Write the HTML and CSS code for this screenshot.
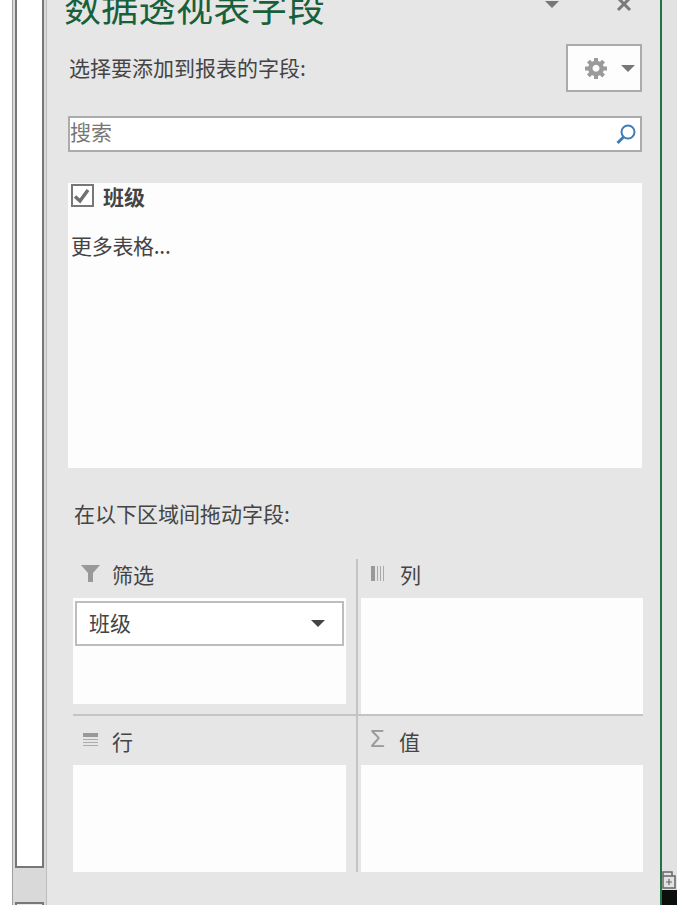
FILE: index.html
```html
<!DOCTYPE html>
<html lang="zh-CN">
<head>
    <meta charset="UTF-8">
    <meta name="viewport" content="width=device-width, initial-scale=1.0">
    <title>数据透视表字段</title>
    <link rel="stylesheet" href="styles.css">
</head>
<body>
    <div class="window">
        <div class="sheet"></div>
        <div class="scrollbar">
            <div class="thumb"></div>
            <div class="scroll-btn"></div>
        </div>

        <div class="panel">
            <div class="title-row">
                <h1>数据透视表字段</h1>
                <div class="title-icons">
                    <span class="caret caret-title"></span>
                    <svg class="close-icon" width="16" height="16" viewBox="0 0 16 16">
                        <path d="M2 1 L14 13 M14 1 L2 13" stroke="#7a7a7a" stroke-width="3" fill="none"/>
                    </svg>
                </div>
            </div>

            <div class="choose-row">
                <p class="choose-label">选择要添加到报表的字段:</p>
                <div class="gear-btn">
                    <svg width="22" height="22" viewBox="0 0 22 22">
                        <path fill="#9a9a9a" fill-rule="evenodd" d="M9 1h4v3l2 .8 2.200-2.100 2.800 2.800L17.900 7.700 18.700 9.500H22v4h-3.300l-.8 1.900 2.100 2.200-2.800 2.800-2.200-2.100-2 .8V22H9v-3.100l-2-.8-2.200 2.100L2 17.400l2.100-2.100-.8-1.800H0v-4h3.300l.8-1.900L2 5.500l2.800-2.800L7 4.800 9 4z M11 7.800a3.500 3.500 0 1 0 .01 0z"/>
                    </svg>
                    <span class="caret caret-gear"></span>
                </div>
            </div>

            <div class="search-box">
                <span class="search-text">搜索</span>
                <svg width="22" height="22" viewBox="0 0 22 22">
                    <circle cx="13" cy="9" r="6.500" fill="none" stroke="#3f7cb8" stroke-width="2"/>
                    <path d="M8.500 14 L2.500 20" stroke="#3f7cb8" stroke-width="3" fill="none"/>
                </svg>
            </div>

            <div class="field-list">
                <div class="field-item">
                    <span class="checkbox">
                        <svg width="19" height="19" viewBox="0 0 19 19">
                            <path d="M2 10.500 L7 15 L15 4" stroke="#707070" stroke-width="3.500" fill="none"/>
                        </svg>
                    </span>
                    <span class="field-name">班级</span>
                </div>
                <p class="more-tables">更多表格...</p>
            </div>

            <p class="drag-label">在以下区域间拖动字段:</p>

            <div class="areas">
                <div class="area area-filter">
                    <div class="area-head">
                        <svg class="area-icon" width="20" height="18" viewBox="0 0 20 18">
                            <path fill="#999" d="M0 0H19L12 8V17H7V8Z"/>
                        </svg>
                        <span>筛选</span>
                    </div>
                    <div class="area-body">
                        <div class="pill">
                            <span class="pill-text">班级</span>
                            <span class="caret caret-pill"></span>
                        </div>
                    </div>
                </div>
                <div class="area area-cols">
                    <div class="area-head">
                        <svg class="area-icon" width="20" height="18" viewBox="0 0 20 18">
                            <path fill="#999" d="M1 1H5V16H1Z"/>
                            <path fill="#aaa" d="M7 1H8V16H7ZM10 1H11V16H10ZM13 1H14V16H13Z"/>
                        </svg>
                        <span>列</span>
                    </div>
                    <div class="area-body"></div>
                </div>
                <div class="area area-rows">
                    <div class="area-head">
                        <svg class="area-icon" width="20" height="18" viewBox="0 0 20 18">
                            <path fill="#999" d="M2 1H17V5H2Z"/>
                            <path fill="#aaa" d="M2 7H17V8H2ZM2 10H17V11H2ZM2 13H17V14H2Z"/>
                        </svg>
                        <span>行</span>
                    </div>
                    <div class="area-body"></div>
                </div>
                <div class="area area-values">
                    <div class="area-head">
                        <span class="sigma">Σ</span>
                        <span>值</span>
                    </div>
                    <div class="area-body"></div>
                </div>
            </div>
        </div>

        <div class="edge">
            <div class="edge-top"></div>
            <svg class="edge-icon" width="15" height="20" viewBox="0 0 15 20">
                <path d="M1 6V2H10V6M1 6H13V18H1Z" stroke="#666" stroke-width="1.500" fill="none"/>
                <path d="M4 12H10M7 9V15" stroke="#666" stroke-width="1.200" fill="none"/>
            </svg>
            <div class="edge-black"></div>
        </div>
    </div>
</body>
</html>
```

FILE: styles.css
```css
html, body {
    margin: 0;
    padding: 0;
    height: 100%;
    overflow: hidden;
}
body {
    font-family: "Noto Sans CJK SC", "Liberation Sans", sans-serif;
    color: #444;
    background: #e6e6e6;
}
p, h1 {
    margin: 0;
    font-weight: normal;
}

.window {
    display: flex;
    width: 677px;
    height: 905px;
    overflow: hidden;
}

/* worksheet strip and its scrollbar */
.sheet {
    width: 12px;
    flex-shrink: 0;
    background-color: #fff;
    background-image: repeating-linear-gradient(to bottom, #fff 0, #fff 33px, #d4d4d4 33px, #d4d4d4 34px);
    background-size: 100% 33px;
    border-right: 1px solid #a0a0a0;
}
.scrollbar {
    width: 34px;
    flex-shrink: 0;
    display: flex;
    flex-direction: column;
    background: #d9d9d9;
    border-right: 1px solid #bdbdbd;
    padding-left: 2px;
    box-sizing: border-box;
}
.thumb {
    width: 29px;
    height: 870px;
    margin-top: -2px;
    box-sizing: border-box;
    background: #fff;
    border: 2px solid #777;
    flex-shrink: 0;
}
.scroll-btn {
    width: 29px;
    height: 20px;
    margin-top: 34px;
    box-sizing: border-box;
    background: #e6e6e6;
    border: 2px solid #777;
    flex-shrink: 0;
}

/* field list panel */
.panel {
    width: 612px;
    margin-left: 1px;
    flex-shrink: 0;
    box-sizing: border-box;
    padding-left: 20px;
    background: #e6e6e6;
}
.title-row {
    display: flex;
    justify-content: space-between;
    width: 572px;
    height: 44px;
}
h1 {
    font-size: 37px;
    letter-spacing: 0.3px;
    line-height: 40px;
    margin-top: -14px;
    margin-left: -4px;
    color: #17603a;
    white-space: nowrap;
}
.title-icons {
    display: flex;
    align-items: flex-start;
    gap: 57px;
    margin-right: 8px;
}
.close-icon {
    margin-top: -3px;
}
.caret {
    display: block;
    width: 0;
    height: 0;
    border-left: 7px solid transparent;
    border-right: 7px solid transparent;
    border-top: 7px solid #777;
}
.caret-title {
    margin-top: 1px;
}

.choose-row {
    display: flex;
    justify-content: space-between;
    width: 574px;
    height: 48px;
}
.choose-label {
    font-size: 21px;
    line-height: 46px;
    padding-left: 1px;
}
.gear-btn {
    width: 76px;
    height: 48px;
    box-sizing: border-box;
    background: #fdfdfd;
    border: 2px solid #ababab;
    display: flex;
    align-items: center;
    padding-left: 17px;
    gap: 14px;
}
.gear-btn svg {
    margin-top: -1px;
}

.search-box {
    width: 574px;
    height: 36px;
    margin-top: 24px;
    box-sizing: border-box;
    background: #fff;
    border: 2px solid #ababab;
    display: flex;
    align-items: center;
    justify-content: space-between;
    padding: 0 3px 0 0;
}
.search-text {
    font-size: 21px;
    color: #777;
    margin-top: -6px;
}

.field-list {
    width: 574px;
    height: 285px;
    margin-top: 31px;
    box-sizing: border-box;
    padding: 1px 3px 0;
    background: #fdfdfd;
}
.field-item {
    display: flex;
    align-items: flex-start;
    gap: 9px;
    height: 23px;
}
.checkbox {
    width: 23px;
    height: 23px;
    box-sizing: border-box;
    border: 2px solid #777;
    background: #fff;
    display: flex;
    align-items: center;
    justify-content: center;
}
.field-name {
    font-size: 21px;
    font-weight: bold;
    line-height: 25px;
}
.more-tables {
    font-size: 21px;
    letter-spacing: -0.3px;
    line-height: 30px;
    margin-top: 23px;
}

.drag-label {
    font-size: 21px;
    line-height: 30px;
    margin: 30px 0 0 6px;
}

.areas {
    display: grid;
    grid-template-columns: 288px 282px;
    grid-template-rows: 155px 158px;
    width: 570px;
    margin: 31px 0 0 5px;
}
.area {
    display: flex;
    flex-direction: column;
}
.area-filter, .area-rows {
    padding-right: 15px;
}
.area-rows {
    padding-top: 10px;
}
.area-values {
    padding-top: 10px;
}
.area-cols, .area-values {
    position: relative;
}
/* divider lines between the four areas */
.area-cols::before, .area-values::before {
    content: "";
    position: absolute;
    left: -5px;
    top: 0;
    bottom: 0;
    width: 2px;
    background: #c4c4c4;
}
.area-rows, .area-values {
    border-top: 2px solid #c4c4c4;
}
.area-values::before {
    top: -2px;
}
.area-head {
    height: 39px;
    flex-shrink: 0;
    box-sizing: border-box;
    padding-bottom: 10px;
    display: flex;
    align-items: center;
    font-size: 21px;
    color: #444;
}
.area-icon {
    margin: 0 11px 0 8px;
    flex-shrink: 0;
    width: 20px;
}
.area-cols .area-icon {
    margin: 0 10px 0 9px;
}
.sigma {
    width: 20px;
    margin: -3px 9px 0 9px;
    font-family: "Liberation Sans", sans-serif;
    font-size: 24px;
    color: #999;
}
.area-body {
    flex: 1;
    background: #fdfdfd;
    padding-top: 3px;
    box-sizing: border-box;
}
.area-filter .area-body {
    margin-bottom: 10px;
}
.pill {
    width: 269px;
    height: 45px;
    margin-left: 2px;
    box-sizing: border-box;
    background: #fff;
    border: 2px solid #bdbdbd;
    display: flex;
    align-items: center;
    justify-content: space-between;
    padding: 0 17px 0 12px;
    font-size: 21px;
}
.pill-text {
    margin-top: -4px;
}
.caret-pill {
    border-top-color: #444;
}

/* sliver of the window behind the panel */
.edge {
    flex: 1;
    display: flex;
    flex-direction: column;
    justify-content: flex-end;
    border-left: 2px solid #217346;
    background: #e2e2e2;
}
.edge-top {
    flex: 1;
}
.edge-icon {
    display: block;
}
.edge-black {
    height: 15px;
    background: #0a0f0c;
}
```
